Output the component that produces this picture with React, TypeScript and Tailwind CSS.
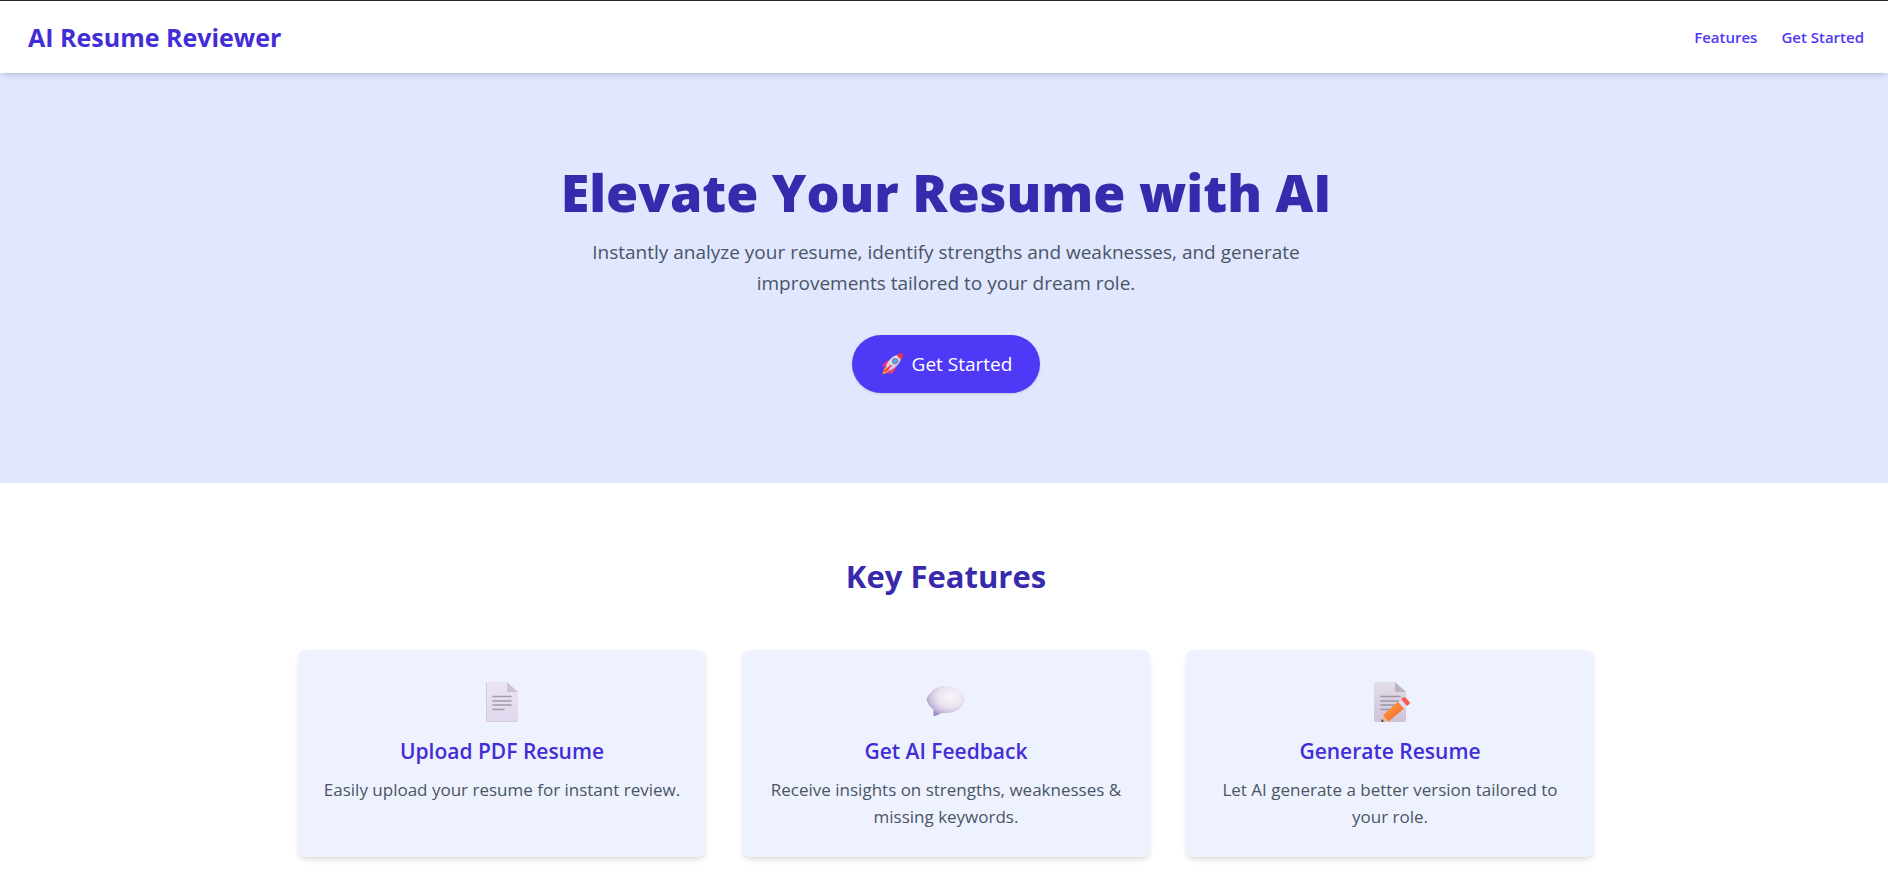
import type { ReactNode } from "react";

function RocketIcon() {
  return (
    <svg viewBox="0 0 32 32" className="size-6" aria-hidden="true">
      <defs>
        <linearGradient id="rocket-body" x1="0" y1="0" x2="1" y2="1">
          <stop offset="0" stopColor="#f4eef8" />
          <stop offset="1" stopColor="#b9adc9" />
        </linearGradient>
      </defs>
      <path d="M6 21 L3 30 L12 27 L13 22 L10 19Z" fill="#ff8a1f" />
      <path d="M7 23 L5 28 L10 26Z" fill="#ffc83d" />
      <path d="M13 11 C8 11 5 15 3 20 L10 19Z" fill="#f4376d" />
      <path d="M21 19 C21 24 18 28 13 30 L13 22Z" fill="#f4376d" />
      <path d="M8 19 C11 10 18 4 27 3 L29 5 C28 14 22 21 13 25Z" fill="url(#rocket-body)" />
      <path d="M22 4 C25 2 28 1.500 31 1.500 C31 5 30 8 28 10Z" fill="#f0304f" />
      <circle cx="20" cy="12" r="3.800" fill="#5a6f9c" />
      <circle cx="20" cy="12" r="2.800" fill="#5fa8e8" />
      <path d="M14 17 L16 18 L8 27 L5 26Z" fill="#f4376d" />
    </svg>
  );
}

function DocumentIcon() {
  return (
    <svg viewBox="0 0 44 44" className="size-11" aria-hidden="true">
      <defs>
        <linearGradient id="doc-paper" x1="0" y1="0" x2="0" y2="1">
          <stop offset="0" stopColor="#ebe4f2" />
          <stop offset="1" stopColor="#e3d8ee" />
        </linearGradient>
      </defs>
      <path d="M7 2 H27 L38 12 V41 Q38 42 37 42 H7 Q6 42 6 41 V3 Q6 2 7 2Z" fill="url(#doc-paper)" />
      <path d="M6.500 3 V41 M7 41.500 H37" stroke="#d5cbdc" fill="none" />
      <path d="M27 2 L38 12 H28 Q27 12 27 11Z" fill="#ccc4d1" />
      <path d="M13 16.500 H31 M13 21 H31 M13 25 H31 M13 29.500 H24" stroke="#a39aab" strokeWidth="1.600" strokeLinecap="round" />
    </svg>
  );
}

function SpeechIcon() {
  return (
    <svg viewBox="0 0 44 44" className="size-11" aria-hidden="true">
      <defs>
        <radialGradient id="bubble" cx="0.620" cy="0.360" r="0.680">
          <stop offset="0" stopColor="#f7f5f8" />
          <stop offset="0.500" stopColor="#ebe3f0" />
          <stop offset="0.800" stopColor="#cbbddc" />
          <stop offset="1" stopColor="#9c88c6" />
        </radialGradient>
      </defs>
      <path d="M22 6 C32 6 38 12 41.500 19.500 C38 28 32 33 22 33 H18 C15 34 12 36 9.500 36 V29.500 C6 27 4 24 2.500 19.500 C5 12 12 6 22 6Z" fill="url(#bubble)" />
    </svg>
  );
}

function MemoIcon() {
  return (
    <svg viewBox="-2 0 44 44" className="size-11" aria-hidden="true">
      <defs>
        <linearGradient id="memo-paper" x1="0" y1="0" x2="0" y2="1">
          <stop offset="0" stopColor="#e2dce8" />
          <stop offset="1" stopColor="#cfc3d7" />
        </linearGradient>
        <linearGradient id="pencil" x1="0" y1="0" x2="1" y2="1">
          <stop offset="0.200" stopColor="#ff9b3a" />
          <stop offset="1" stopColor="#f05a35" />
        </linearGradient>
      </defs>
      <path d="M6 2 H25 L36 12 V40 Q36 42 34 42 H6 Q4 42 4 40 V4 Q4 2 6 2Z" fill="url(#memo-paper)" />
      <path d="M25 2 L36 12 H27 Q25 12 25 10Z" fill="#bdb4c2" />
      <path d="M11 16.500 H30 M11 21 H30 M11 25 H28 M11 29.500 H22" stroke="#9d94a5" strokeWidth="1.500" strokeLinecap="round" />
      <path d="M14 34.500 L18 41 L11 42Z" fill="#e8b98c" />
      <path d="M12 39 L14 41.600 L11 42Z" fill="#5b3548" />
      <path d="M13 35 L28 21.500 L34 28.500 L18.500 41.500Z" fill="url(#pencil)" />
      <path d="M28 21.500 L31 19 L37 26 L34 28.500Z" fill="#e3d8ec" />
      <path d="M31 19 L33.500 17.200 Q34.500 16.500 35.500 17.500 L39.500 22 Q40.300 23 39.500 24 L37 26Z" fill="#fa5b50" />
    </svg>
  );
}

type Feature = { title: string; text: string; icon: ReactNode };

const features: Feature[] = [
  { title: "Upload PDF Resume", text: "Easily upload your resume for instant review.", icon: <DocumentIcon /> },
  { title: "Get AI Feedback", text: "Receive insights on strengths, weaknesses & missing keywords.", icon: <SpeechIcon /> },
  { title: "Generate Resume", text: "Let AI generate a better version tailored to your role.", icon: <MemoIcon /> },
];

export default function App() {
  return (
    <div className="min-h-screen bg-white font-['Open_Sans','Noto_Sans',sans-serif]">
      <header className="relative flex items-center justify-between border-t border-[#27272a] bg-white px-6 py-4 pl-7 shadow-md">
        <p className="text-[25px] leading-10 font-bold text-indigo-700">AI Resume Reviewer</p>
        <nav className="flex gap-6 text-[15px] leading-6 font-semibold text-indigo-600">
          <a href="#features">Features</a>
          <a href="#start">Get Started</a>
        </nav>
      </header>

      <main>
        <section id="start" className="flex flex-col items-center bg-indigo-100 pt-[89px] pb-[90px] pl-1 text-center">
          <h1 className="text-[52px] leading-[60px] font-extrabold text-indigo-800">Elevate Your Resume with AI</h1>
          <p className="mt-[15px] max-w-[740px] text-[19px] leading-[31px] text-gray-600">
            Instantly analyze your resume, identify strengths and weaknesses, and generate improvements tailored to your dream role.
          </p>
          <button type="button" className="mt-9 flex items-center gap-2 rounded-full bg-indigo-600 px-7 py-[14px] text-[19px] leading-[30px] text-white shadow-sm">
            <RocketIcon />
            Get Started
          </button>
        </section>

        <section id="features" className="bg-white pt-[69px] pb-5 pl-1">
          <h2 className="text-center text-[31px] leading-[48px] font-bold text-indigo-800">Key Features</h2>
          <div className="mx-auto mt-[50px] grid max-w-[1296px] grid-cols-3 gap-9">
            {features.map((feature) => (
              <article key={feature.title} className="flex flex-col items-center rounded-lg bg-[#eef2ff] px-5 pt-[30px] pb-[27px] text-center shadow-md">
                {feature.icon}
                <h3 className="mt-3 text-[21px] leading-[31px] font-semibold text-indigo-700">{feature.title}</h3>
                <p className="mt-[9px] text-[17px] leading-[27px] text-gray-600">{feature.text}</p>
              </article>
            ))}
          </div>
        </section>
      </main>
    </div>
  );
}
